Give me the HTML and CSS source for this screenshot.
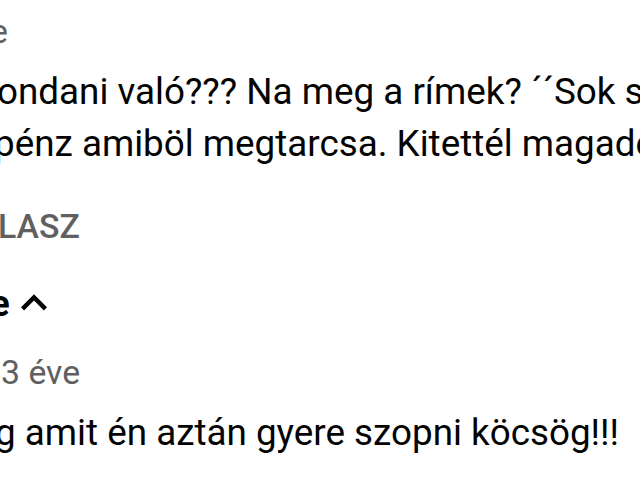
FILE: index.html
```html
<!DOCTYPE html>
<html lang="hu">
<head>
    <meta charset="UTF-8">
    <meta name="viewport" content="width=device-width, initial-scale=1.0">
    <title>Hozzászólások</title>
    <link rel="stylesheet" href="styles.css">
</head>
<body>
    <div class="thread">
        <div class="meta meta-tail">e</div>

        <p class="comment-text">
            <span class="line line-o">ondani való??? Na meg a rímek? ´´Sok s</span>
            <span class="line line-p">pénz amiböl megtarcsa. Kitettél magadé</span>
        </p>

        <div class="reply-btn">LASZ</div>

        <div class="toggle">
            <span class="toggle-label">e</span>
            <svg class="toggle-icon" viewBox="0 0 24 24" aria-hidden="true">
                <path d="M7.41 15.41L12 10.83l4.59 4.58L18 14l-6-6-6 6z"></path>
            </svg>
        </div>

        <div class="reply">
            <div class="meta meta-age">3 éve</div>
            <p class="comment-text">
                <span class="line line-g">g amit én aztán gyere szopni köcsög!!!</span>
            </p>
        </div>
    </div>
</body>
</html>
```

FILE: styles.css
```css
/* YouTube comment thread, zoomed 2.6x */
body {
    margin: 0;
    background: #fff;
    font-family: Roboto, "Noto Sans", Arial, sans-serif;
    overflow: hidden;
}
.thread {
    width: 640px;
    height: 480px;
    overflow: hidden;
    padding-top: 9px;
    box-sizing: border-box;
}
.meta {
    color: #606060;
    font-size: 33.8px;
    line-height: 46.8px;
    white-space: nowrap;
}
.meta-tail {
    margin-left: -10px;
}
.meta-age {
    margin-left: 1px;
}
.comment-text {
    margin: 10.7px 0 0;
    color: #030303;
    font-size: 36.8px;
    line-height: 52px;
}
.line {
    display: block;
    white-space: nowrap;
}
.line-o {
    margin-left: -3px;
}
.line-p {
    margin-left: -6px;
}
.line-g {
    margin-left: -5px;
}
.reply-btn {
    margin: 33.5px 0 0 -2px;
    color: #606060;
    font-size: 33.8px;
    font-weight: 500;
    line-height: 46.8px;
    white-space: nowrap;
}
.toggle {
    display: flex;
    align-items: center;
    height: 52px;
    margin: 26.7px 0 0 -10px;
    color: #030303;
    font-size: 36.4px;
    font-weight: 700;
}
.toggle-icon {
    width: 52px;
    height: 52px;
    margin-left: -2px;
    fill: #030303;
}
.reply {
    margin-top: 21px;
}
.reply .comment-text {
    margin-top: 10px;
}
```
